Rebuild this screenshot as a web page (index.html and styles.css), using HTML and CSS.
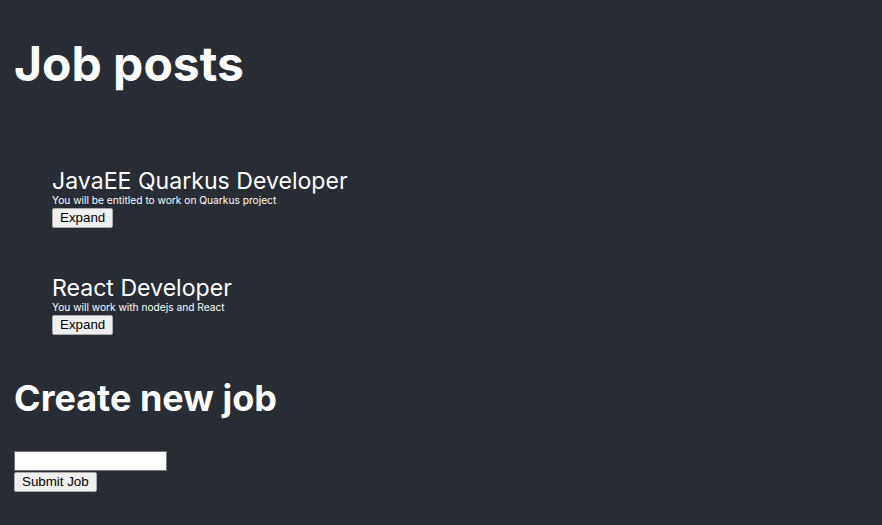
FILE: index.html
```html
<!DOCTYPE html>
<html>
<head>
<meta charset="utf-8">
<link rel="stylesheet" href="styles.css">
</head>
<body>
<div class="app">
  <h1 class="title">Job posts</h1>
  <div class="jobs">
    <div class="job">
      <div class="job-title">JavaEE Quarkus Developer</div>
      <div class="job-desc">You will be entitled to work on Quarkus project</div>
      <button class="btn">Expand</button>
    </div>
    <div class="job">
      <div class="job-title">React Developer</div>
      <div class="job-desc">You will work with nodejs and React</div>
      <button class="btn">Expand</button>
    </div>
  </div>
  <h2 class="subtitle">Create new job</h2>
  <form class="form">
    <input class="field" type="text">
    <button class="btn" type="button">Submit Job</button>
  </form>
</div>
</body>
</html>
```
FILE: styles.css
```css
html, body {
  margin: 0;
  padding: 0;
  background: #282c34;
  height: 100%;
}
.app {
  padding: 0 14px;
  color: #fff;
  font-family: Inter, "Noto Sans", sans-serif;
}
.title {
  font-size: 48px;
  font-weight: 700;
  margin: 0;
  padding-top: 32px;
  line-height: 64px;
}
.jobs {
  padding: 72px 0 0 38px;
}
.job {
  margin-bottom: 47px;
}
.job:last-child {
  margin-bottom: 41px;
}
.job-title {
  font-size: 23.1px;
  line-height: 27px;
}
.job-desc {
  font-size: 10.2px;
  line-height: 11px;
}
.btn {
  font-family: "Liberation Sans", Arial, sans-serif;
  font-size: 13.33px;
  line-height: 16px;
  margin: 0;
  padding: 1px 7px;
  background: #efefef;
  border: 1px solid #a9a9a9;
  border-radius: 2px;
  color: #000;
}
.subtitle {
  font-size: 36px;
  font-weight: 700;
  margin: 0;
}
.form {
  display: flex;
  flex-direction: column;
  align-items: flex-start;
  padding-top: 31px;
}
.field {
  margin: 0 0 1px;
  width: 153px;
  height: 20px;
  box-sizing: border-box;
  border: 1px solid #767676;
  padding: 1px 2px;
  background: #fff;
}
```
